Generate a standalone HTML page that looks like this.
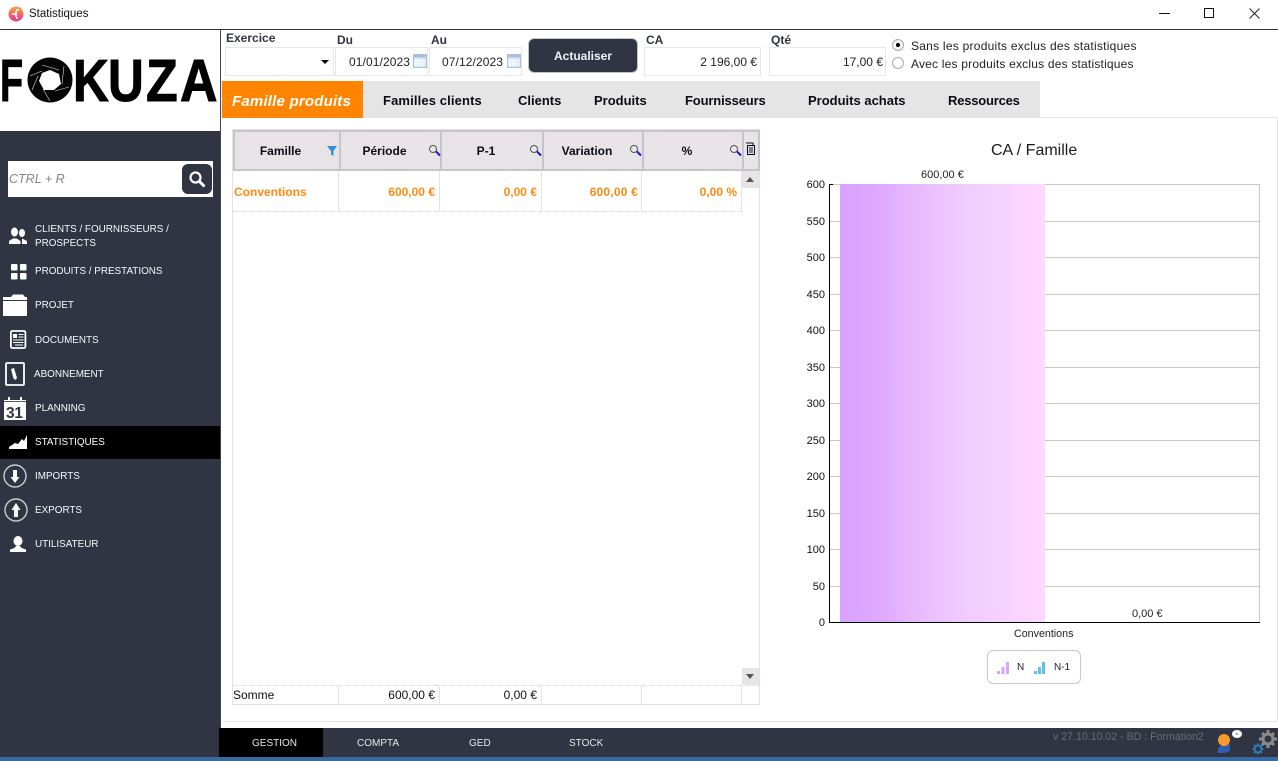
<!DOCTYPE html>
<html lang="fr"><head><meta charset="utf-8"><title>Statistiques</title>
<style>
*{box-sizing:border-box}
html,body{margin:0;padding:0;background:#fff}
body{width:1278px;height:761px;position:relative;overflow:hidden;font-family:"Liberation Sans",sans-serif;font-size:12px;color:#000}
.a{position:absolute;white-space:nowrap}
.inp{position:absolute;background:#fff;border:1px solid #e6e6e6;height:29px;top:47px}
.lab{position:absolute;font-weight:bold;font-size:12px;color:#2e3440;white-space:nowrap}
.tab{position:absolute;top:93px;font-weight:bold;font-size:13px;color:#0c0c14;white-space:nowrap}
.nav{position:absolute;left:35px;color:#f8f8f8;font-size:9.900px;line-height:14px;white-space:nowrap;margin-top:1px}
.hd{position:absolute;top:130px;height:41px;background:#e7e3e7;border:2px solid #c6c4c8;border-right:0;font-weight:bold;font-size:12px;line-height:39px;text-align:center;color:#0c0c14}
.vl{position:absolute;width:1px;background:#e4e4e4}
.cell{position:absolute;color:#ff8a0f;font-weight:bold;font-size:12px;white-space:nowrap;top:185px}
.sum{position:absolute;top:688px;color:#111;font-size:12px;white-space:nowrap}
.y{position:absolute;width:22px;left:803px;text-align:right;font-size:11px;line-height:12px;color:#111;margin-top:1px}
.g{position:absolute;left:829px;width:430px;height:1px;background:#c8c8c8}
.bot{position:absolute;top:738px;color:#e8e8e8;font-size:10px;white-space:nowrap}
.logo{position:absolute;top:47px;font-weight:bold;font-size:59px;line-height:68px;color:#000;transform-origin:0 50%;-webkit-text-stroke:1px #000}
</style></head><body>

<!-- title bar -->
<svg class="a" style="left:8px;top:6px" width="16" height="16" viewBox="0 0 16 16"><defs><linearGradient id="tb" x1="0" y1="0" x2="0" y2="1"><stop offset="0" stop-color="#f7a63b"/><stop offset="1" stop-color="#e8348f"/></linearGradient></defs><circle cx="8" cy="8" r="7.500" fill="url(#tb)"/><path d="M4 8h4M8 4h3M8 12h2M8 5v6" stroke="#fff" stroke-width="1.600" fill="none"/></svg>
<div class="a" style="left:29px;top:8px;font-size:11.500px;color:#111">Statistiques</div>
<div class="a" style="left:1159px;top:13px;width:11px;height:1px;background:#111"></div>
<div class="a" style="left:1204px;top:8px;width:10px;height:10px;border:1px solid #111"></div>
<svg class="a" style="left:1249px;top:8px" width="11" height="11" viewBox="0 0 11 11"><path d="M.5.5l10 10M10.500.5l-10 10" stroke="#222" stroke-width="1" fill="none"/></svg>
<div class="a" style="left:0;top:29px;width:1278px;height:1px;background:#333"></div>

<!-- sidebar -->
<div class="a" style="left:220px;top:30px;width:1px;height:101px;background:#444"></div>
<div class="a" style="left:0;top:131px;width:220px;height:630px;background:#313543"></div>
<div class="logo" style="left:0;transform:scaleX(.64)">F</div>
<div class="logo" style="left:33px;font-size:46px">O</div>
<div class="logo" style="left:73px;transform:scaleX(.84)">K</div>
<div class="logo" style="left:108px;transform:scaleX(.84)">U</div>
<div class="logo" style="left:146px;transform:scaleX(.88)">Z</div>
<div class="logo" style="left:180px;transform:scaleX(.88)">A</div>
<svg class="a" style="left:27px;top:57px" width="46" height="46" viewBox="0 0 46 46"><circle cx="23" cy="23" r="22.500" fill="#050505"/><polygon points="23,13 32,17 34,27 27,33 17,33 12,24 15,16" fill="#fff"/><path d="M15 8l17 5M37 9l-2 18M42 30l-14 4M23 44l-7-12M5 33l6-14M3 19l12-5" stroke="#ddd" stroke-width=".6" fill="none"/></svg>

<div class="a" style="left:8px;top:161px;width:205px;height:36px;background:#fff"></div>
<div class="a" style="left:9px;top:172px;font-size:12.500px;font-style:italic;color:#85858c">CTRL + R</div>
<div class="a" style="left:182px;top:164px;width:30px;height:30px;background:#313543;border-radius:6px"></div>
<svg class="a" style="left:188px;top:170px" width="18" height="18" viewBox="0 0 18 18"><circle cx="7.500" cy="7.500" r="5" fill="none" stroke="#fff" stroke-width="2.200"/><path d="M11 11l5.500 5.500" stroke="#fff" stroke-width="3"/></svg>

<svg class="a" style="left:0;top:210px" width="40" height="350" viewBox="0 0 40 350" fill="#fff">
<ellipse cx="14.500" cy="22" rx="3.500" ry="4.500"/><path d="M9 34v-3l4-2.500h3.500l4 2.500v3z"/><ellipse cx="22" cy="23" rx="3" ry="4"/><path d="M22 28.500l5 2.500v3h-5v-3z"/>
<rect x="11" y="54" width="6.500" height="6.500" rx="1"/><rect x="20" y="54" width="6.500" height="6.500" rx="1"/><rect x="11" y="63" width="6.500" height="6.500" rx="1"/><rect x="20" y="63" width="6.500" height="6.500" rx="1"/>
<path d="M3 90v-3h8l2-2.500h10l2 2.500h2v3z"/><rect x="3" y="91" width="24" height="15"/>
<rect x="10.900" y="121" width="14.500" height="17" rx="1.500" fill="none" stroke="#fff" stroke-width="1.800"/><rect x="13" y="124" width="4" height="4"/><path d="M18.500 124.500h5M18.500 127h5M13 130h10.500M13 132.500h10.500M15 135h8" stroke="#fff" fill="none"/>
<rect x="6" y="153" width="18" height="22" rx="1" fill="none" stroke="#fff" stroke-width="1.800"/><path d="M11 159l3-1 3 10-1.500 2-2-1.500z"/>
<rect x="4" y="192" width="22" height="18"/><rect x="4" y="190" width="22" height="1.200"/><rect x="8" y="187" width="2" height="4"/><rect x="20" y="187" width="2" height="4"/>
<text x="6" y="208" font-family="Liberation Sans" font-weight="bold" font-size="15.500" fill="#313543" letter-spacing="-.3">31</text>
<circle cx="15" cy="266" r="11" fill="none" stroke="#ccc" stroke-width="1.400"/><path d="M13 260h4v7h2.500L15 273l-4.500-6H13z"/>
<circle cx="16" cy="300" r="11" fill="none" stroke="#ccc" stroke-width="1.400"/><path d="M14 307h4v-7h2.500L16 293l-4.500 7H14z"/>
<ellipse cx="18" cy="331" rx="4.500" ry="5"/><path d="M10 342v-2.500c3-1 5-1.500 6-3.500h4c1 2 3 2.500 6 3.500v2.500z"/>
</svg>
<div class="a" style="left:0;top:426px;width:220px;height:33px;background:#000"></div>
<svg class="a" style="left:0;top:426px" width="40" height="33"><path d="M9 23v-2l6-4 3 1 4-5 2 2 3-6v14z" fill="#fff"/></svg>

<div class="nav" style="top:222px">CLIENTS / FOURNISSEURS /<br>PROSPECTS</div>
<div class="nav" style="top:264px">PRODUITS / PRESTATIONS</div>
<div class="nav" style="top:298px">PROJET</div>
<div class="nav" style="top:333px">DOCUMENTS</div>
<div class="nav" style="top:367px;left:34px">ABONNEMENT</div>
<div class="nav" style="top:401px">PLANNING</div>
<div class="nav" style="top:435px;color:#fff">STATISTIQUES</div>
<div class="nav" style="top:469px">IMPORTS</div>
<div class="nav" style="top:503px">EXPORTS</div>
<div class="nav" style="top:537px">UTILISATEUR</div>

<!-- toolbar -->
<div class="lab" style="left:226px;top:31px">Exercice</div>
<div class="inp" style="left:225px;width:109px"></div>
<div class="a" style="left:321px;top:60px;border:4px solid transparent;border-top:4px solid #000;border-bottom:0"></div>
<div class="lab" style="left:337px;top:33px">Du</div>
<div class="inp" style="left:335px;width:93px"></div>
<div class="a" style="left:349px;top:55px;font-size:12px;color:#222;letter-spacing:.1px">01/01/2023</div>
<div class="lab" style="left:431px;top:33px">Au</div>
<div class="inp" style="left:429px;width:93px"></div>
<div class="a" style="left:442px;top:55px;font-size:12px;color:#222;letter-spacing:.1px">07/12/2023</div>
<svg class="a" style="left:413px;top:54px" width="110" height="15"><g id="c"><rect x=".5" y=".5" width="13" height="13" fill="#d8e6f7" stroke="#a9c0e0"/><rect x=".5" y=".5" width="13" height="3" fill="#a9c0e0"/><path d="M3 5v8M6 5v8M9 5v8M1 7h12M1 10h12" stroke="#fff"/></g><use href="#c" x="94"/></svg>
<div class="a" style="left:528px;top:38px;width:110px;height:35px;background:#313543;border:1px solid #c4c4c8;border-radius:6px;color:#f2f2f2;font-weight:bold;font-size:12px;text-align:center;line-height:35px">Actualiser</div>
<div class="lab" style="left:646px;top:33px">CA</div>
<div class="inp" style="left:644px;width:117px"></div>
<div class="a" style="right:521px;top:55px;font-size:12px;color:#222">2 196,00 €</div>
<div class="lab" style="left:771px;top:33px">Qté</div>
<div class="inp" style="left:769px;width:117px"></div>
<div class="a" style="right:395px;top:55px;font-size:12px;color:#222">17,00 €</div>
<div class="a" style="left:892px;top:39px;width:12px;height:12px;border:1px solid #aaa;border-radius:50%;background:#f4f4f4"></div>
<div class="a" style="left:896px;top:43px;width:4px;height:4px;border-radius:50%;background:#000"></div>
<div class="a" style="left:892px;top:57px;width:12px;height:12px;border:1px solid #aaa;border-radius:50%;background:#fff"></div>
<div class="a" style="left:911px;top:39px;font-size:12px;color:#222;letter-spacing:.25px">Sans les produits exclus des statistiques</div>
<div class="a" style="left:911px;top:57px;font-size:12px;color:#222;letter-spacing:.2px">Avec les produits exclus des statistiques</div>

<!-- tabs -->
<div class="a" style="left:222px;top:81px;width:818px;height:37px;background:#e5e5e5"></div>
<div class="a" style="left:222px;top:81px;width:141px;height:37px;background:#ff8500"></div>
<div class="a" style="left:232px;top:93px;color:#fff;font-weight:bold;font-style:italic;font-size:15px;letter-spacing:.2px">Famille produits</div>
<div class="tab" style="left:383px;letter-spacing:.13px">Familles clients</div>
<div class="tab" style="left:518px">Clients</div>
<div class="tab" style="left:594px">Produits</div>
<div class="tab" style="left:685px;letter-spacing:-.15px">Fournisseurs</div>
<div class="tab" style="left:808px">Produits achats</div>
<div class="tab" style="left:948px;letter-spacing:-.2px">Ressources</div>

<!-- content frame -->
<div class="a" style="left:1040px;top:117px;width:238px;height:1px;background:#e6e6e6"></div>
<div class="a" style="left:220px;top:118px;width:2px;height:610px;background:#fff;border-left:1px solid #444"></div>
<div class="a" style="left:1277px;top:118px;width:1px;height:604px;background:#e6e6e6"></div>
<div class="a" style="left:222px;top:721px;width:1056px;height:1px;background:#e6e6e6"></div>

<!-- table -->
<div class="a" style="left:232px;top:129px;width:528px;height:576px;border:1px solid #e2e2e2"></div>
<div class="hd" style="left:233px;width:106px;padding-right:13px">Famille</div>
<div class="hd" style="left:339px;width:101px;padding-right:12px">Période</div>
<div class="hd" style="left:440px;width:102px;padding-right:12px">P-1</div>
<div class="hd" style="left:542px;width:100px;padding-right:12px">Variation</div>
<div class="hd" style="left:642px;width:100px;padding-right:12px">%</div>
<div class="hd" style="left:742px;width:18px;border-right:2px solid #c6c4c8"></div>
<svg class="a" style="left:327px;top:145px" width="11" height="12"><path d="M0 1h10L6.500 6v5L4 9.500V6z" fill="#3a8fd0"/></svg>
<svg class="a" style="left:428px;top:144px" width="320" height="16"><g id="m"><circle cx="5" cy="5" r="3.500" fill="#e8e8e8" stroke="#555"/><path d="M8 7.500l4 4" stroke="#1a1ad0" stroke-width="2"/></g><use href="#m" x="101"/><use href="#m" x="201"/><use href="#m" x="301"/></svg>
<svg class="a" style="left:745px;top:142px" width="11" height="14"><rect x="2.500" y="3.500" width="7" height="9" fill="#cfe0f5" stroke="#111"/><path d="M1 1h7v2" stroke="#111" fill="none"/><path d="M4 6h4M4 8h4M4 10h4" stroke="#222"/></svg>
<div class="a" style="left:742px;top:171px;width:17px;height:17px;background:#e7e3e7"></div>
<div class="a" style="left:746px;top:177px;border:4px solid transparent;border-bottom:5px solid #555;border-top:0"></div>
<div class="a" style="left:742px;top:668px;width:17px;height:17px;background:#e7e3e7"></div>
<div class="a" style="left:746px;top:674px;border:4px solid transparent;border-top:5px solid #555;border-bottom:0"></div>
<div class="vl" style="left:338px;top:171px;height:40px"></div>
<div class="vl" style="left:439px;top:171px;height:40px"></div>
<div class="vl" style="left:541px;top:171px;height:40px"></div>
<div class="vl" style="left:641px;top:171px;height:40px"></div>
<div class="vl" style="left:741px;top:171px;height:40px"></div>
<div class="a" style="left:233px;top:211px;width:509px;border-top:1px dotted #d8d8d8"></div>
<div class="cell" style="left:234px">Conventions</div>
<div class="cell" style="right:843px">600,00 €</div>
<div class="cell" style="right:741px">0,00 €</div>
<div class="cell" style="right:640px;letter-spacing:.2px">600,00 €</div>
<div class="cell" style="right:541px">0,00 %</div>
<div class="a" style="left:233px;top:685px;width:526px;border-top:1px dotted #d8d8d8"></div>
<div class="vl" style="left:338px;top:686px;height:18px"></div>
<div class="vl" style="left:439px;top:686px;height:18px"></div>
<div class="vl" style="left:541px;top:686px;height:18px"></div>
<div class="vl" style="left:641px;top:686px;height:18px"></div>
<div class="vl" style="left:741px;top:686px;height:18px"></div>
<div class="sum" style="left:233px">Somme</div>
<div class="sum" style="right:843px">600,00 €</div>
<div class="sum" style="right:741px">0,00 €</div>

<!-- chart -->
<div class="a" style="left:991px;top:142px;font-size:16px;color:#1a1a22">CA / Famille</div>
<div class="g" style="top:184px"></div><div class="g" style="top:221px"></div><div class="g" style="top:257px"></div><div class="g" style="top:294px"></div><div class="g" style="top:330px"></div><div class="g" style="top:367px"></div><div class="g" style="top:403px"></div><div class="g" style="top:440px"></div><div class="g" style="top:476px"></div><div class="g" style="top:513px"></div><div class="g" style="top:549px"></div><div class="g" style="top:586px"></div>
<div class="a" style="left:1259px;top:184px;width:1px;height:439px;background:#c8c8c8"></div>
<div class="a" style="left:840px;top:184px;width:205px;height:438px;background:linear-gradient(90deg,#d8a2ff 0%,#dfaaff 22%,#e4b4ff 30%,#ecc4ff 50%,#f2ceff 65%,#f6d2ff 80%,#fed8ff 100%)"></div>
<div class="a" style="left:829px;top:184px;width:1px;height:439px;background:#000"></div>
<div class="a" style="left:829px;top:184px;width:4px;height:1px;background:#000"></div>
<div class="a" style="left:829px;top:622px;width:431px;height:1px;background:#000"></div>
<div class="a" style="left:921px;top:169px;font-size:11px;color:#222;line-height:13px">600,00 €</div>
<div class="a" style="left:1132px;top:608px;font-size:11px;color:#222;line-height:13px">0,00 €</div>
<div class="a" style="left:1014px;top:628px;font-size:10.700px;color:#222;line-height:13px">Conventions</div>
<div class="y" style="top:178px">600</div><div class="y" style="top:215px">550</div><div class="y" style="top:251px">500</div><div class="y" style="top:288px">450</div><div class="y" style="top:324px">400</div><div class="y" style="top:361px">350</div><div class="y" style="top:397px">300</div><div class="y" style="top:434px">250</div><div class="y" style="top:470px">200</div><div class="y" style="top:507px">150</div><div class="y" style="top:543px">100</div><div class="y" style="top:580px">50</div><div class="y" style="top:616px">0</div>
<div class="a" style="left:987px;top:650px;width:94px;height:34px;border:1px solid #c8c8c8;border-radius:6px;background:#fff"></div>
<svg class="a" style="left:997px;top:661px" width="50" height="14"><path d="M0 10h3v3H0zM4.500 6h3v7h-3zM9 1h3v12H9z" fill="#d6a6fa"/><path d="M37 10h3v3h-3zM41 6h3v7h-3zM45 1h3v12h-3z" fill="#5cc0e8"/></svg>
<div class="a" style="left:1017px;top:662px;font-size:10px;color:#222">N</div>
<div class="a" style="left:1054px;top:662px;font-size:10px;color:#222">N-1</div>

<!-- bottom bar -->
<div class="a" style="left:219px;top:728px;width:1059px;height:29px;background:#313543"></div>
<div class="a" style="left:0;top:757px;width:1278px;height:4px;background:#356ba3"></div>
<div class="a" style="left:219px;top:728px;width:104px;height:29px;background:#000"></div>
<div class="bot" style="left:252px">GESTION</div>
<div class="bot" style="left:357px">COMPTA</div>
<div class="bot" style="left:469px">GED</div>
<div class="bot" style="left:569px">STOCK</div>
<div class="a" style="left:1053px;top:731px;font-size:10.600px;line-height:13px;color:#6b6b70">v 27.10.10.02 - BD : Formation2</div>
<svg class="a" style="left:1215px;top:728px" width="63" height="29" viewBox="0 0 63 29">
<ellipse cx="22" cy="6" rx="5" ry="4" fill="#fff"/><path d="M21 5l1.500 2" stroke="#555"/>
<path d="M3 25v-3c0-3 3-5 6-5l6-1v7l-5 2z" fill="#2f5db0"/><circle cx="9" cy="12" r="6" fill="#f59a2e"/>
<g fill="none" stroke="#8a8a8e" stroke-width="3"><circle cx="53" cy="11" r="5"/></g><g stroke="#8a8a8e" stroke-width="3"><path d="M53 2v3M53 17v3M44 11h3M59 11h3M47 5l2 2M57 15l2 2M59 5l-2 2M49 15l-2 2"/></g>
<g fill="none" stroke="#2f78b8" stroke-width="2"><circle cx="43" cy="21" r="3.500"/></g><g stroke="#2f78b8" stroke-width="2"><path d="M43 15.500v2M43 24.500v2M37.500 21h2M46.500 21h2M39 17l1.500 1.500M45.500 23.500L47 25M47 17l-1.500 1.500M40.500 23.500L39 25"/></g>
</svg>
</body></html>
